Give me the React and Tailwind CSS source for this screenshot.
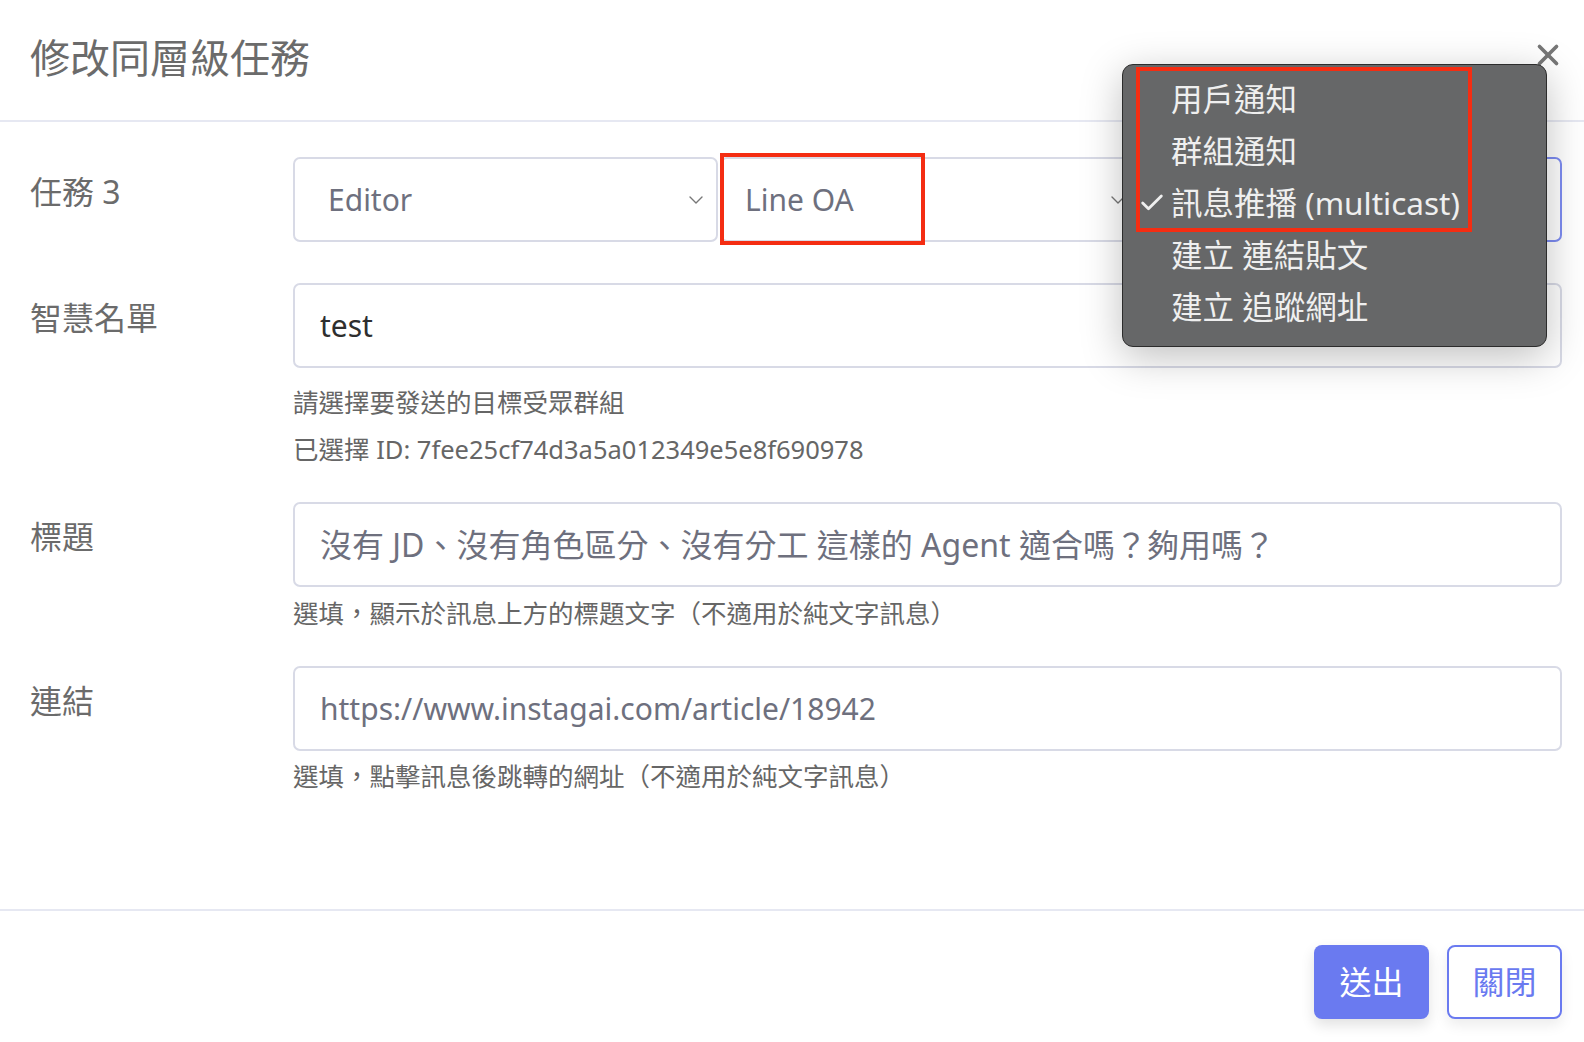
import { Check, ChevronDown, X } from "lucide-react";

const font = { fontFamily: '"Noto Sans", "Noto Sans CJK TC", sans-serif' };

const MENU = [
    { label: "用戶通知" },
    { label: "群組通知" },
    { label: "訊息推播 (multicast)", checked: true },
    { label: "建立 連結貼文" },
    { label: "建立 追蹤網址" },
];

const Label = ({ children }) => (
    <div className="w-[263px] shrink-0 pt-[17px] text-[32px] leading-[36px] text-[#6b6b6b]">{children}</div>
);

const Help = ({ children, className = "" }) => (
    <p className={`text-[25.5px] leading-[34px] text-[#666] ${className}`}>{children}</p>
);

const Field = ({ children, dark, size = "text-[30px]" }) => (
    <div
        className={`flex h-[85px] items-center rounded-[7px] border-2 border-[#d8dae6] pl-[25px] ${size} ${
            dark ? "text-[#2e2e2e]" : "text-[#6e707e]"
        }`}
    >
        {children}
    </div>
);

const App = () => {
    return (
        <div className="relative flex h-[1042px] w-full flex-col overflow-hidden bg-white" style={font}>
            {/* header */}
            <div className="flex h-[122px] shrink-0 items-center justify-between border-b-2 border-[#e6e8f2] pl-[30px] pr-[19px]">
                <h2 className="pb-[4px] text-[40px] font-normal text-[#6b6b6b]">修改同層級任務</h2>
                <X size={34} strokeWidth={2.6} className="mb-[10px] text-[#777]" />
            </div>

            {/* body */}
            <div className="flex flex-col pl-[30px] pr-[22px] pt-[35px]">
                <div className="flex">
                    <Label>任務 3</Label>
                    <div className="grid flex-1 grid-cols-[425px_420px_1fr] gap-[2px]">
                        <div className="flex h-[85px] items-center justify-between rounded-[7px] border-2 border-[#d8dae6] pl-[33px] pr-[8px] text-[30px] text-[#6e707e]">
                            Editor
                            <ChevronDown size={24} strokeWidth={1.4} className="text-[#777]" />
                        </div>
                        <div className="flex h-[85px] items-center justify-between rounded-[7px] border-2 border-[#d8dae6] pl-[23px] pr-[8px] text-[30px] text-[#6e707e]">
                            Line OA
                            <ChevronDown size={24} strokeWidth={1.4} className="text-[#777]" />
                        </div>
                        <div className="flex h-[85px] items-center justify-end rounded-[7px] border-2 border-[#7d8cf2] pr-[8px] text-[30px] text-[#6e707e]">
                            <ChevronDown size={24} strokeWidth={1.4} className="text-[#777]" />
                        </div>
                    </div>
                </div>

                <div className="mt-[41px] flex">
                    <Label>智慧名單</Label>
                    <div className="flex-1">
                        <Field dark>test</Field>
                        <Help className="mt-[17px]">請選擇要發送的目標受眾群組</Help>
                        <Help className="mt-[13px]">已選擇 ID: 7fee25cf74d3a5a012349e5e8f690978</Help>
                    </div>
                </div>

                <div className="mt-[36px] flex">
                    <Label>標題</Label>
                    <div className="flex-1">
                        <Field size="text-[32px]">沒有 JD、沒有角色區分、沒有分工 這樣的 Agent 適合嗎？夠用嗎？</Field>
                        <Help className="mt-[9px]">選填，顯示於訊息上方的標題文字（不適用於純文字訊息）</Help>
                    </div>
                </div>

                <div className="mt-[36px] flex">
                    <Label>連結</Label>
                    <div className="flex-1">
                        <Field>https://www.instagai.com/article/18942</Field>
                        <Help className="mt-[8px]">選填，點擊訊息後跳轉的網址（不適用於純文字訊息）</Help>
                    </div>
                </div>
            </div>

            {/* footer */}
            <div className="mt-auto flex justify-end gap-[18px] border-t-2 border-[#e6e8f2] pb-[23px] pr-[22px] pt-[34px]">
                <button className="h-[74px] w-[115px] rounded-[8px] bg-[#6a7af0] text-[32px] text-white shadow-[0_6px_14px_rgba(0,0,0,0.12)]">
                    送出
                </button>
                <button className="h-[74px] w-[115px] rounded-[8px] border-2 border-[#6a7af0] bg-white text-[32px] text-[#6a7af0] shadow-[0_6px_14px_rgba(0,0,0,0.08)]">
                    關閉
                </button>
            </div>

            {/* native select menu */}
            <div className="absolute left-[1122px] top-[64px] w-[425px] rounded-[11px] border border-[#2c2c2c] bg-[#666768] pb-[13px] pt-[8px] shadow-[0_10px_40px_rgba(0,0,0,0.25)]">
                {MENU.map((m) => (
                    <div key={m.label} className="relative flex h-[52px] items-center pl-[48px] text-[31.5px] text-[#efefef]">
                        {m.checked && <Check size={28} strokeWidth={2.4} className="absolute left-[15px] text-[#efefef]" />}
                        {m.label}
                    </div>
                ))}
            </div>

            {/* annotation boxes */}
            <div className="absolute left-[720px] top-[153px] h-[92px] w-[205px] border-4 border-[#f42d12]" />
            <div className="absolute left-[1136px] top-[67px] h-[165px] w-[336px] border-4 border-[#f42d12]" />
        </div>
    );
};

export default App;
